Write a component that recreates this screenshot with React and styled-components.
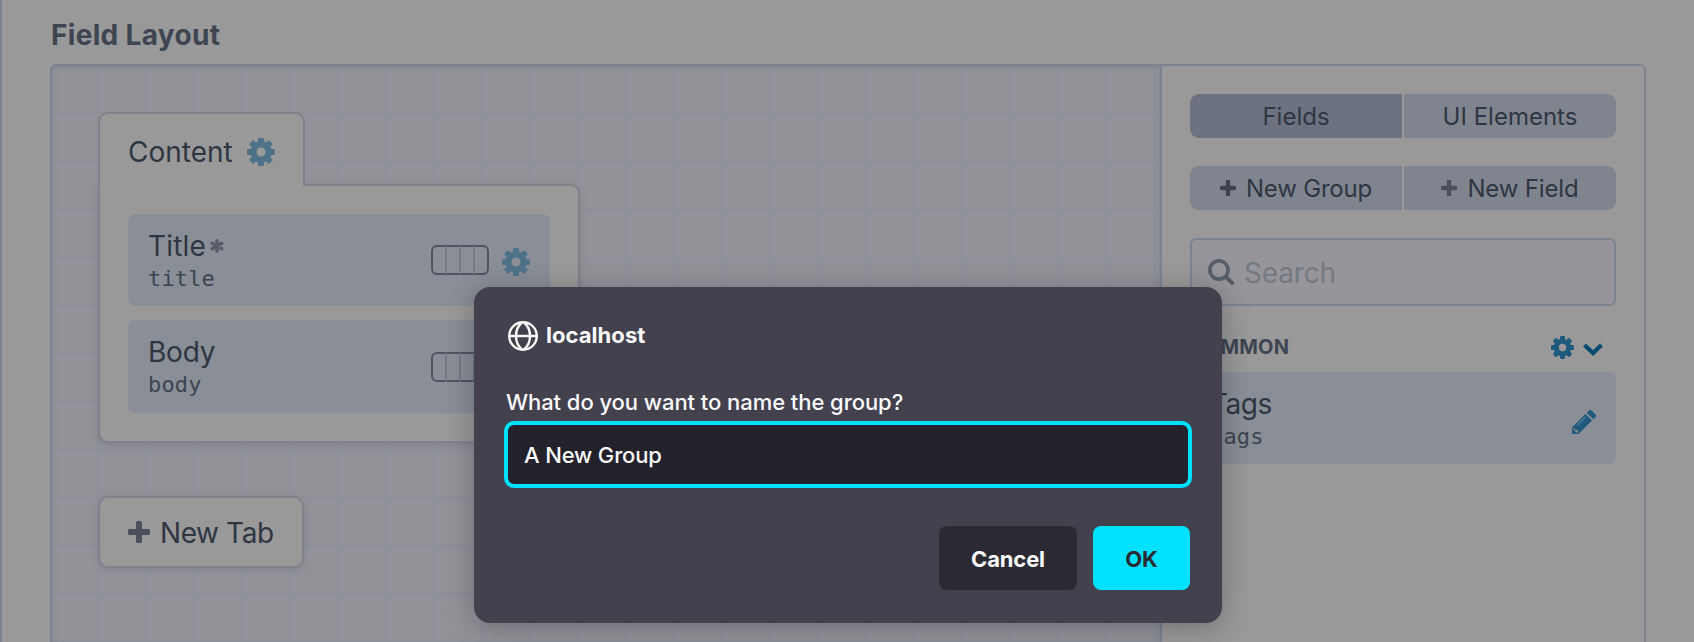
import React from "react";
import styled, { createGlobalStyle } from "styled-components";

const c = {
  page: "#999999",
  ink: "#2f3642",
  mutedInk: "#3d4450",
  border: "#7d838e",
  softBorder: "#818289",
  card: "#898e97",
  button: "#80848e",
  buttonActive: "#6c7280",
  grid: "#8d9097",
  canvas: "#929398",
  modal: "#42414d",
  modalInk: "#fbfbfe",
  accent: "#00e1ff",
};

const GlobalStyle = createGlobalStyle`
  * { box-sizing: border-box; }
  html, body, #root { height: 100%; }
  body {
    margin: 0;
    overflow: hidden;
    background: ${c.page};
    color: ${c.ink};
    font-family: Inter, "Liberation Sans", sans-serif;
  }
  svg { display: block; flex: none; }
`;

const Page = styled.div`
  height: 642px;
  overflow: hidden;
  border-left: 2px solid ${c.border};
  padding: 15px 48px 0;
`;

const Heading = styled.h2`
  margin: 0 0 9px;
  height: 40px;
  padding-left: 1px;
  font-size: 28px;
  line-height: 40px;
  font-weight: 700;
  letter-spacing: 0.32px;
  color: #3e4551;
`;

const Designer = styled.div`
  display: flex;
  height: 640px;
  border: 2px solid ${c.border};
  border-radius: 6px;
  overflow: hidden;
`;

const Canvas = styled.div`
  flex: 1;
  padding: 46px;
  background-color: ${c.canvas};
  background-image: linear-gradient(to right, ${c.grid} 2px, transparent 0),
    linear-gradient(to bottom, ${c.grid} 2px, transparent 0);
  background-size: 48px 48px;
  background-position: -2px -2px;
  box-shadow: inset 0 1px 4px rgba(100, 112, 132, 0.5);
`;

const Tab = styled.div`
  display: flex;
  align-items: center;
  gap: 14px;
  position: relative;
  width: 207px;
  height: 74px;
  padding: 3px 27px 0 28px;
  border: 2px solid ${c.softBorder};
  border-bottom: 0;
  border-radius: 10px 10px 0 0;
  background: ${c.page};
  font-size: 28px;
`;

const TabPanel = styled.div`
  display: flex;
  flex-direction: column;
  gap: 14px;
  width: 482px;
  height: 259px;
  margin-top: -2px;
  padding: 28px;
  border: 2px solid ${c.softBorder};
  border-radius: 0 10px 10px 10px;
  background: ${c.page};
  box-shadow: 0 2px 6px rgba(60, 64, 90, 0.22);
`;

const TabLabel = styled.span`
  line-height: 34px;
  letter-spacing: ${(p) => p.$track || 0}px;
`;

const FieldCard = styled.div`
  display: flex;
  align-items: center;
  justify-content: space-between;
  height: ${(p) => p.$height || 92}px;
  padding: 0 20px;
  border-radius: 8px;
  background: ${c.card};
`;

const FieldText = styled.div`
  padding-top: 1px;
`;

const FieldName = styled.div`
  display: flex;
  align-items: center;
  gap: 4px;
  height: 34px;
  font-size: 28px;
  line-height: 34px;
  letter-spacing: ${(p) => p.$track || 0}px;
`;

const Handle = styled.div`
  height: 30px;
  padding-top: 2px;
  font: 22px/28px "DejaVu Sans Mono", "Liberation Mono", monospace;
  letter-spacing: 0.15px;
  color: ${c.mutedInk};
`;

const Actions = styled.div`
  display: flex;
  align-items: center;
  gap: ${(p) => p.$gap || 13}px;
`;

const CardActions = styled(Actions)`
  height: 34px;
  align-items: flex-end;

  svg:first-child { margin-bottom: 2px; }
  svg:last-child { margin-bottom: 1px; }
`;

const EditAction = styled.div`
  padding-top: 8px;
`;

const NewTab = styled.button`
  display: flex;
  align-items: center;
  gap: 10px;
  width: 206px;
  height: 72px;
  margin: 53px 0 0;
  padding: 0 0 1px 28px;
  border: 2px solid ${c.softBorder};
  border-radius: 10px;
  background: ${c.page};
  box-shadow: 0 2px 6px rgba(60, 64, 90, 0.18);
  color: ${c.ink};
  font: 28px/34px Inter, sans-serif;
`;

const NewTabLabel = styled(TabLabel)`
  padding-top: 2px;
`;

const Sidebar = styled.aside`
  width: 484px;
  padding: 28px;
  border-left: 2px solid ${c.border};
  background: ${c.page};
`;

const ButtonGroup = styled.div`
  display: grid;
  grid-template-columns: 1fr 1fr;
  gap: 2px;
  height: 44px;
  margin-bottom: 28px;
  border-radius: 9px;
  overflow: hidden;
`;

const GroupButton = styled.button`
  display: flex;
  align-items: center;
  justify-content: center;
  gap: 10px;
  padding: 2px 0 0;
  border: 0;
  background: ${(p) => (p.$active ? c.buttonActive : c.button)};
  color: ${c.ink};
  font: 24px/30px Inter, sans-serif;
  letter-spacing: ${(p) => p.$track || 0}px;

  svg { margin-top: -2px; }
`;

const SearchBox = styled.div`
  display: flex;
  align-items: center;
  gap: 9px;
  height: 68px;
  padding-left: 16px;
  border: 2px solid ${c.border};
  border-radius: 6px;
  background: #969599;
  color: #747a81;
  font-size: 28px;
  letter-spacing: -0.15px;
`;

const SearchText = styled.span`
  padding-top: 2px;
`;

const GroupHeader = styled.div`
  display: flex;
  align-items: center;
  justify-content: space-between;
  height: 28px;
  margin: 27px 13px 11px 0;
  font-size: 20px;
  font-weight: 700;
  letter-spacing: 0.15px;
  color: #3e4551;
`;

const Toggle = styled.div`
  padding-top: 5px;
`;

const Dialog = styled.div`
  position: absolute;
  left: 474px;
  top: 287px;
  width: 748px;
  height: 336px;
  padding: 32px 30px;
  border-radius: 16px;
  background: ${c.modal};
  color: ${c.modalInk};
  box-shadow: 0 4px 28px rgba(20, 20, 30, 0.3);
  font-size: 22px;
`;

const Origin = styled.div`
  display: flex;
  align-items: center;
  gap: 8px;
  height: 34px;
  padding-left: 4px;
  font-weight: 700;
  letter-spacing: 0.05px;
`;

const OriginName = styled.span`
  padding-bottom: 2px;
`;

const Prompt = styled.label`
  display: block;
  height: 28px;
  margin: 35px 0 5px 2px;
  line-height: 28px;
  font-weight: 500;
  letter-spacing: -0.06px;
`;

const Input = styled.div`
  height: 67px;
  padding-left: 16px;
  border: 4px solid ${c.accent};
  border-radius: 10px;
  background: #23222b;
  line-height: 61px;
  font-weight: 500;
  letter-spacing: -0.15px;
`;

const Footer = styled.div`
  display: flex;
  justify-content: flex-end;
  gap: 16px;
  margin: 38px 2px 0 0;
`;

const DialogButton = styled.button`
  width: ${(p) => (p.$primary ? 97 : 138)}px;
  height: 64px;
  padding: 2px 0 0;
  border: 0;
  border-radius: 8px;
  background: ${(p) => (p.$primary ? c.accent : "#2b2a33")};
  color: ${(p) => (p.$primary ? "#2b2a33" : c.modalInk)};
  font: 700 22px/28px Inter, sans-serif;
  letter-spacing: -0.15px;
`;

const Gear = ({ size = 28, color = "#4e7389" }) => (
  <svg width={size} height={size} viewBox="-14 -14 28 28" fill={color}>
    {[0, 45, 90, 135, 180, 225, 270, 315].map((a) => (
      <rect key={a} x="-3" y="-14" width="6" height="8" rx="1.2" transform={`rotate(${a})`} />
    ))}
    <circle r="7.6" fill="none" stroke={color} strokeWidth="6.2" />
  </svg>
);

const Plus = ({ size = 22, color = "#4a515c" }) => (
  <svg width={size} height={size} viewBox="0 0 22 22" fill={color}>
    <rect x="8" width="6" height="22" rx="1.5" />
    <rect y="8" width="22" height="6" rx="1.5" />
  </svg>
);

const WidthSlider = () => (
  <svg width="58" height="30" fill="none">
    <rect x="1" y="1" width="56" height="28" rx="5" stroke="#505462" strokeWidth="2" />
    <path d="M15 1v28M29 1v28M43 1v28" stroke="#767b86" strokeWidth="2" />
  </svg>
);

const Required = () => (
  <svg width="14" height="14" viewBox="-7 -7 14 14" stroke="#585d69" strokeWidth="3.4" strokeLinecap="round">
    <path d="M0-5.2V5.2M-4.8-2.8 4.8 2.8M-4.8 2.8 4.8-2.8" />
  </svg>
);

const SearchIcon = () => (
  <svg width="27" height="27" fill="none" stroke="#585e68" strokeLinecap="round">
    <circle cx="11" cy="11" r="9.1" strokeWidth="3.6" />
    <path d="m18.5 18.5 5.7 5.5" strokeWidth="4" />
  </svg>
);

const Chevron = () => (
  <svg width="20" height="13" fill="none" stroke="#074a70" strokeWidth="4.2">
    <path d="M1.5 2 10 10l8.500-8" />
  </svg>
);

const Pencil = () => (
  <svg width="24" height="24" fill="#1f597b">
    <path d="M0 17.500 13.500 4l6.500 6.500L6.500 24H0Z" />
    <path d="m14.800 2.700 2-2q1.500-1.400 3 0l3.500 3.500q1.400 1.500 0 3l-2 2Z" />
    <path d="m5 15.500 8.600-8.600" stroke="#7894a5" strokeWidth="1" />
    <path d="M1.800 18.200 3 17.500v2.700h3v2.200l-1 .6-3.200-2.800Z" fill="#898e97" />
  </svg>
);

const Globe = () => (
  <svg width="30" height="30" fill="none" stroke="#fbfbfe" strokeWidth="2.400">
    <circle cx="15" cy="15" r="13.800" />
    <path d="M1 15h28M14 1.500C6 8 6 22 14 28.500M16 1.500c8 6.500 8 20.500 0 27" />
  </svg>
);

export default function App() {
  return (
    <>
      <GlobalStyle />
      <Page>
        <Heading>Field Layout</Heading>
        <Designer>
          <Canvas>
            <Tab>
              <TabLabel>Content</TabLabel>
              <Gear />
            </Tab>
            <TabPanel>
              <FieldCard>
                <FieldText>
                  <FieldName $track={0.15}>Title <Required /></FieldName>
                  <Handle>title</Handle>
                </FieldText>
                <CardActions>
                  <WidthSlider />
                  <Gear />
                </CardActions>
              </FieldCard>
              <FieldCard $height={93}>
                <FieldText>
                  <FieldName $track={-0.2}>Body</FieldName>
                  <Handle>body</Handle>
                </FieldText>
                <CardActions>
                  <WidthSlider />
                  <Gear />
                </CardActions>
              </FieldCard>
            </TabPanel>
            <NewTab>
              <Plus />
              <NewTabLabel $track={-0.4}>New Tab</NewTabLabel>
            </NewTab>
          </Canvas>
          <Sidebar>
            <ButtonGroup>
              <GroupButton $active>Fields</GroupButton>
              <GroupButton>UI Elements</GroupButton>
            </ButtonGroup>
            <ButtonGroup>
              <GroupButton $track={-0.2}><Plus size={16} color="#3d444f" />New Group</GroupButton>
              <GroupButton $track={-0.15}><Plus size={16} />New Field</GroupButton>
            </ButtonGroup>
            <SearchBox>
              <SearchIcon />
              <SearchText>Search</SearchText>
            </SearchBox>
            <GroupHeader>
              COMMON
              <Actions $gap={9}>
                <Gear size={23} color="#1f597b" />
                <Toggle>
                  <Chevron />
                </Toggle>
              </Actions>
            </GroupHeader>
            <FieldCard>
              <FieldText>
                <FieldName $track={-0.5}>Tags</FieldName>
                <Handle>tags</Handle>
              </FieldText>
              <EditAction>
                <Pencil />
              </EditAction>
            </FieldCard>
          </Sidebar>
        </Designer>
      </Page>
      <Dialog role="dialog">
        <Origin><Globe /><OriginName>localhost</OriginName></Origin>
        <Prompt>What do you want to name the group?</Prompt>
        <Input>A New Group</Input>
        <Footer>
          <DialogButton>Cancel</DialogButton>
          <DialogButton $primary>OK</DialogButton>
        </Footer>
      </Dialog>
    </>
  );
}
